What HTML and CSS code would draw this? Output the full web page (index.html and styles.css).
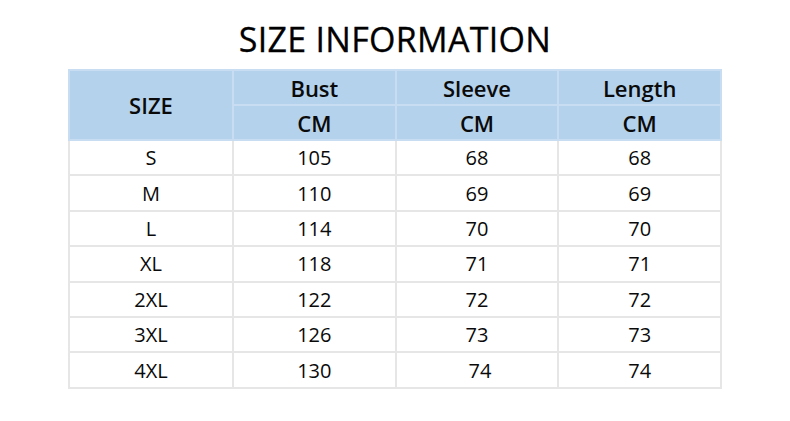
FILE: index.html
```html
<!DOCTYPE html>
<html>
<head>
<meta charset="utf-8">
<link rel="stylesheet" href="styles.css">
</head>
<body>
<div class="page">
  <h1 class="title">SIZE INFORMATION</h1>
  <table class="size-table">
    <thead>
      <tr>
        <th rowspan="2" class="size-head">SIZE</th>
        <th>Bust</th>
        <th>Sleeve</th>
        <th>Length</th>
      </tr>
      <tr>
        <th>CM</th>
        <th>CM</th>
        <th>CM</th>
      </tr>
    </thead>
    <tbody>
      <tr><td>S</td><td>105</td><td>68</td><td>68</td></tr>
      <tr><td>M</td><td>110</td><td>69</td><td>69</td></tr>
      <tr><td>L</td><td>114</td><td>70</td><td>70</td></tr>
      <tr><td>XL</td><td>118</td><td>71</td><td>71</td></tr>
      <tr><td>2XL</td><td>122</td><td>72</td><td>72</td></tr>
      <tr><td>3XL</td><td>126</td><td>73</td><td>73</td></tr>
      <tr><td>4XL</td><td>130</td><td class="nudge">74</td><td>74</td></tr>
    </tbody>
  </table>
</div>
</body>
</html>
```
FILE: styles.css
```css
html, body {
  margin: 0;
  padding: 0;
  background: #ffffff;
}

.page {
  width: 790px;
  height: 421px;
  font-family: "Open Sans", "Noto Sans", sans-serif;
  color: #000000;
  padding-top: 17px;
  box-sizing: border-box;
}

.title {
  margin: 0;
  font-size: 34px;
  font-weight: 400;
  line-height: 44px;
  text-align: center;
  color: #000000;
  letter-spacing: 0.3px;
  -webkit-text-stroke: 0.3px #000;
}

.size-table {
  margin: 8px 0 0 68px;
  width: 654px;
  border-collapse: collapse;
  table-layout: fixed;
}

.size-table th {
  background: #b4d2ec;
  border: 2px solid #c8ddf1;
  font-weight: 600;
  font-size: 22px;
  height: 33px;
  padding: 0;
  text-align: center;
  color: #0a0a0a;
}

.size-table th.size-head {
  width: 162px;
}

.size-table td {
  border: 2px solid #e6e6e6;
  font-size: 20px;
  font-weight: 400;
  height: 33.4px;
  padding: 0;
  text-align: center;
  color: #0a0a0a;
}

.size-table td.nudge {
  padding-left: 6px;
}
```
